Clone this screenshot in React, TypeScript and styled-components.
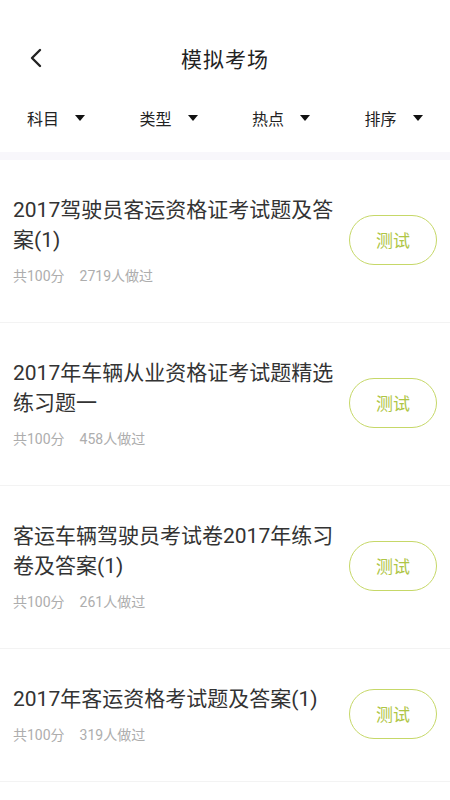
import React from 'react';
import styled, { createGlobalStyle } from 'styled-components';

const GlobalStyle = createGlobalStyle`
    html, body {
        margin: 0;
        padding: 0;
        background: #ffffff;
    }
    body {
        font-family: Roboto, "Noto Sans CJK SC", sans-serif;
    }
`
const Page = styled.div`
    width: 450px;
    min-height: 800px;
    background: #ffffff;
`
const NavBar = styled.div`
    margin-top: 28px;
    height: 60px;
    display: flex;
    align-items: center;
    justify-content: center;
    position: relative;
`
const BackButton = styled.div`
    position: absolute;
    left: 24px;
    top: 50%;
    transform: translateY(-50%);
    width: 24px;
    height: 24px;
    display: flex;
    align-items: center;
    justify-content: center;
`
const Title = styled.h1`
    margin: 0;
    font-size: 21px;
    font-weight: 400;
    color: #222222;
    letter-spacing: 1px;
`
const FilterBar = styled.div`
    height: 64px;
    display: grid;
    grid-template-columns: repeat(4, 1fr);
    align-items: center;
    padding-bottom: 4px;
    box-sizing: border-box;
`
const FilterItem = styled.div`
    display: flex;
    align-items: center;
    padding-left: 27px;
    font-size: 16px;
    color: #222222;
    gap: 16px;
`
const Caret = styled.span`
    width: 0;
    height: 0;
    border-left: 5px solid transparent;
    border-right: 5px solid transparent;
    border-top: 6px solid #111111;
`
const Band = styled.div`
    height: 8px;
    background: #f8f7fb;
`
const Row = styled.div`
    display: flex;
    align-items: center;
    padding: 35px 13px 38px 13px;
    border-bottom: 1px solid #f3f3f3;
`
const RowText = styled.div`
    flex: 1;
    padding-right: 4px;
`
const RowTitle = styled.div`
    font-size: 21px;
    line-height: 30px;
    color: #333333;
`
const Meta = styled.div`
    margin-top: 13px;
    display: flex;
    gap: 15px;
    font-size: 14px;
    line-height: 16px;
    color: #adadad;
`
const TestButton = styled.button`
    flex: none;
    width: 88px;
    height: 50px;
    border-radius: 25px;
    border: 1.5px solid #c6d868;
    background: #ffffff;
    color: #afc646;
    font-family: Roboto, "Noto Sans CJK SC", sans-serif;
    font-size: 17px;
    padding: 0;
    cursor: pointer;
`

const filters = ['科目', '类型', '热点', '排序'];

const exams = [
    { title: '2017驾驶员客运资格证考试题及答案(1)', score: 100, count: 2719 },
    { title: '2017年车辆从业资格证考试题精选练习题一', score: 100, count: 458 },
    { title: '客运车辆驾驶员考试卷2017年练习卷及答案(1)', score: 100, count: 261 },
    { title: '2017年客运资格考试题及答案(1)', score: 100, count: 319 },
];

const App: React.FC = () => {
    return (
        <Page>
            <GlobalStyle />
            <NavBar>
                <BackButton>
                    <svg width="16" height="20" viewBox="0 0 16 20">
                        <path d="M12 2 L4 10 L12 18" fill="none" stroke="#222" strokeWidth="2.4" strokeLinecap="round" strokeLinejoin="round" />
                    </svg>
                </BackButton>
                <Title>模拟考场</Title>
            </NavBar>
            <FilterBar>
                {filters.map((f) => (
                    <FilterItem key={f}>
                        <span>{f}</span>
                        <Caret />
                    </FilterItem>
                ))}
            </FilterBar>
            <Band />
            {exams.map((e) => (
                <Row key={e.title}>
                    <RowText>
                        <RowTitle>{e.title}</RowTitle>
                        <Meta>
                            <span>共{e.score}分</span>
                            <span>{e.count}人做过</span>
                        </Meta>
                    </RowText>
                    <TestButton>测试</TestButton>
                </Row>
            ))}
        </Page>
    );
};

export default App;
